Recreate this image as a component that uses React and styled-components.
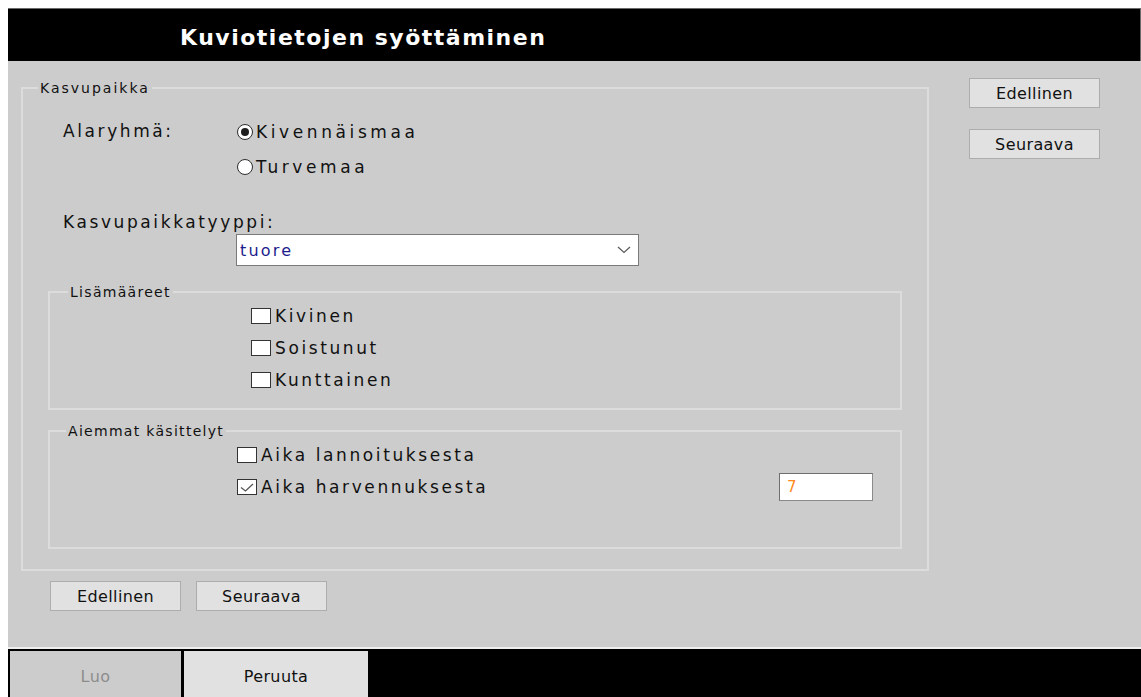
import React from "react";
import styled, { createGlobalStyle } from "styled-components";

const GlobalStyle = createGlobalStyle`
  html, body {
    overflow: hidden;
    background: #ffffff;
  }
  body {
    margin: 8px 0 0 8px;
    font-family: "DejaVu Sans", "Liberation Sans", sans-serif;
    color: #111111;
  }
  * { box-sizing: border-box; }
`;

const Window = styled.div`
  width: 1133px;
  display: flex;
  flex-direction: column;
`;

const Header = styled.header`
  height: 53px;
  background: #000000;
  border-top: 1px solid #6a6a6a;
  border-right: 1px solid #6a6a6a;
  display: flex;
  align-items: center;
  padding: 5px 0 0 172px;
`;

const Title = styled.h1`
  margin: 0;
  color: #ffffff;
  font-size: 22px;
  font-weight: bold;
  letter-spacing: 1.5px;
`;

const Main = styled.main`
  height: 586px;
  background: #cccccc;
  display: flex;
  align-items: flex-start;
  padding: 17px 0 0 13px;
`;

const LeftColumn = styled.div`
  display: flex;
  flex-direction: column;
  padding-top: 2px;
`;

const RightColumn = styled.div`
  display: flex;
  flex-direction: column;
  gap: 21px;
  margin-left: 40px;
`;

const Group = styled.fieldset`
  margin: ${(p) => p.$top || 0}px 0 0 0;
  padding: 0;
  width: ${(p) => p.$width}px;
  border: 2px solid #dcdcdc;
  min-width: 0;
`;

const Legend = styled.legend`
  margin-left: ${(p) => p.$offset}px;
  padding: 0 2px;
  font-size: 14px;
  line-height: 16px;
  letter-spacing: ${(p) => p.$spacing || 1.3}px;
  color: #111111;
`;

const GroupBody = styled.div`
  padding: ${(p) => p.$pad};
`;

const Text = styled.span`
  font-size: 17px;
  letter-spacing: ${(p) => p.$spacing || 2.6}px;
  white-space: nowrap;
`;

const RadioRow = styled.div`
  display: grid;
  grid-template-columns: 174px auto;
  padding-left: 15px;
`;

const RowLabel = styled(Text)`
  line-height: 35px;
`;

const RadioList = styled.div`
  display: flex;
  flex-direction: column;
`;

const Option = styled.label`
  display: flex;
  align-items: center;
  gap: ${(p) => p.$gap}px;
  height: ${(p) => p.$height}px;
`;

const RadioCircle = styled.span`
  width: 16px;
  height: 16px;
  border-radius: 50%;
  border: 1px solid #2b2b2b;
  background: #ffffff;
  display: flex;
  align-items: center;
  justify-content: center;
  flex: none;

  &::after {
    content: "";
    width: 8px;
    height: 8px;
    border-radius: 50%;
    background: #1e1e1e;
    display: ${(p) => (p.$checked ? "block" : "none")};
  }
`;

const Box = styled.span`
  width: 20px;
  height: 16px;
  border: 1px solid #333333;
  background: #ffffff;
  display: flex;
  align-items: center;
  justify-content: center;
  flex: none;
`;

const FieldLabel = styled(Text)`
  display: block;
  margin-top: 26px;
  padding-left: 15px;
  line-height: 24px;
`;

const Select = styled.div`
  margin-left: 188px;
  width: 403px;
  height: 32px;
  background: #ffffff;
  border: 1px solid #7a7a7a;
  display: flex;
  align-items: center;
  justify-content: space-between;
  padding: 0 7px 0 3px;
`;

const SelectValue = styled.span`
  color: #1d1d8e;
  font-size: 16px;
  letter-spacing: 2.2px;
`;

const CheckRow = styled.div`
  display: flex;
  align-items: center;
  justify-content: space-between;
  height: 32px;
`;

const NumberBox = styled.div`
  width: 94px;
  height: 28px;
  background: #ffffff;
  border: 1px solid #8a8a8a;
  border-top-color: #6e6e6e;
  border-left-color: #6e6e6e;
  color: #ff8a1c;
  font-size: 15px;
  display: flex;
  align-items: center;
  padding-left: 7px;
`;

const ButtonRow = styled.div`
  display: flex;
  gap: 15px;
  margin: 10px 0 0 29px;
`;

const Button = styled.button`
  width: 131px;
  height: 30px;
  background: #e1e1e1;
  border: 1px solid #adadad;
  font-family: inherit;
  font-size: 16px;
  letter-spacing: 0.4px;
  color: #111111;
  padding: 0;
`;

const Divider = styled.div`
  height: 2px;
  background: #eeeeee;
`;

const Footer = styled.footer`
  height: 52px;
  background: #000000;
  display: flex;
  gap: 3px;
  padding: 2px 0 0 2px;
`;

const FooterButton = styled.button`
  width: ${(p) => p.$width}px;
  height: 50px;
  border: none;
  background: ${(p) => (p.$disabled ? "#cccccc" : "#e1e1e1")};
  color: ${(p) => (p.$disabled ? "#8c8c8c" : "#111111")};
  font-family: inherit;
  font-size: 16px;
  letter-spacing: 0.4px;
  padding: 0;
`;

const Chevron = () => (
  <svg width="14" height="8" viewBox="0 0 14 8">
    <polyline points="1,1 7,6.5 13,1" fill="none" stroke="#5a5a5a" strokeWidth="1.2" />
  </svg>
);

const Check = () => (
  <svg width="16" height="13" viewBox="0 0 16 13">
    <polyline points="2,6.5 6.5,10 14,3" fill="none" stroke="#555555" strokeWidth="1.3" />
  </svg>
);

const Radio = ({ checked, children }) => (
  <Option $height={35} $gap={3}>
    <RadioCircle $checked={checked} />
    <Text $spacing={3.6}>{children}</Text>
  </Option>
);

const CheckBox = ({ checked, children }) => (
  <Option $height={32} $gap={4}>
    <Box>{checked && <Check />}</Box>
    <Text>{children}</Text>
  </Option>
);

export default function App() {
  return (
    <>
      <GlobalStyle />
      <Window>
        <Header>
          <Title>Kuviotietojen syöttäminen</Title>
        </Header>
        <Main>
          <LeftColumn>
            <Group $width={908}>
              <Legend $offset={15} $spacing={2}>Kasvupaikka</Legend>
              <GroupBody $pad="18px 25px 20px 25px">
                <RadioRow>
                  <RowLabel>Alaryhmä:</RowLabel>
                  <RadioList>
                    <Radio checked>Kivennäismaa</Radio>
                    <Radio>Turvemaa</Radio>
                  </RadioList>
                </RadioRow>
                <FieldLabel>Kasvupaikkatyyppi:</FieldLabel>
                <Select>
                  <SelectValue>tuore</SelectValue>
                  <Chevron />
                </Select>
                <Group $top={18} $width={854}>
                  <Legend $offset={18}>Lisämääreet</Legend>
                  <GroupBody $pad="0 0 12px 201px">
                    <CheckBox>Kivinen</CheckBox>
                    <CheckBox>Soistunut</CheckBox>
                    <CheckBox>Kunttainen</CheckBox>
                  </GroupBody>
                </Group>
                <Group $top={13} $width={854}>
                  <Legend $offset={16}>Aiemmat käsittelyt</Legend>
                  <GroupBody $pad="0 27px 44px 187px">
                    <CheckRow>
                      <CheckBox>Aika lannoituksesta</CheckBox>
                    </CheckRow>
                    <CheckRow>
                      <CheckBox checked>Aika harvennuksesta</CheckBox>
                      <NumberBox>7</NumberBox>
                    </CheckRow>
                  </GroupBody>
                </Group>
              </GroupBody>
            </Group>
            <ButtonRow>
              <Button>Edellinen</Button>
              <Button>Seuraava</Button>
            </ButtonRow>
          </LeftColumn>
          <RightColumn>
            <Button>Edellinen</Button>
            <Button>Seuraava</Button>
          </RightColumn>
        </Main>
        <Divider />
        <Footer>
          <FooterButton $width={171} $disabled>Luo</FooterButton>
          <FooterButton $width={184}>Peruuta</FooterButton>
        </Footer>
      </Window>
    </>
  );
}
